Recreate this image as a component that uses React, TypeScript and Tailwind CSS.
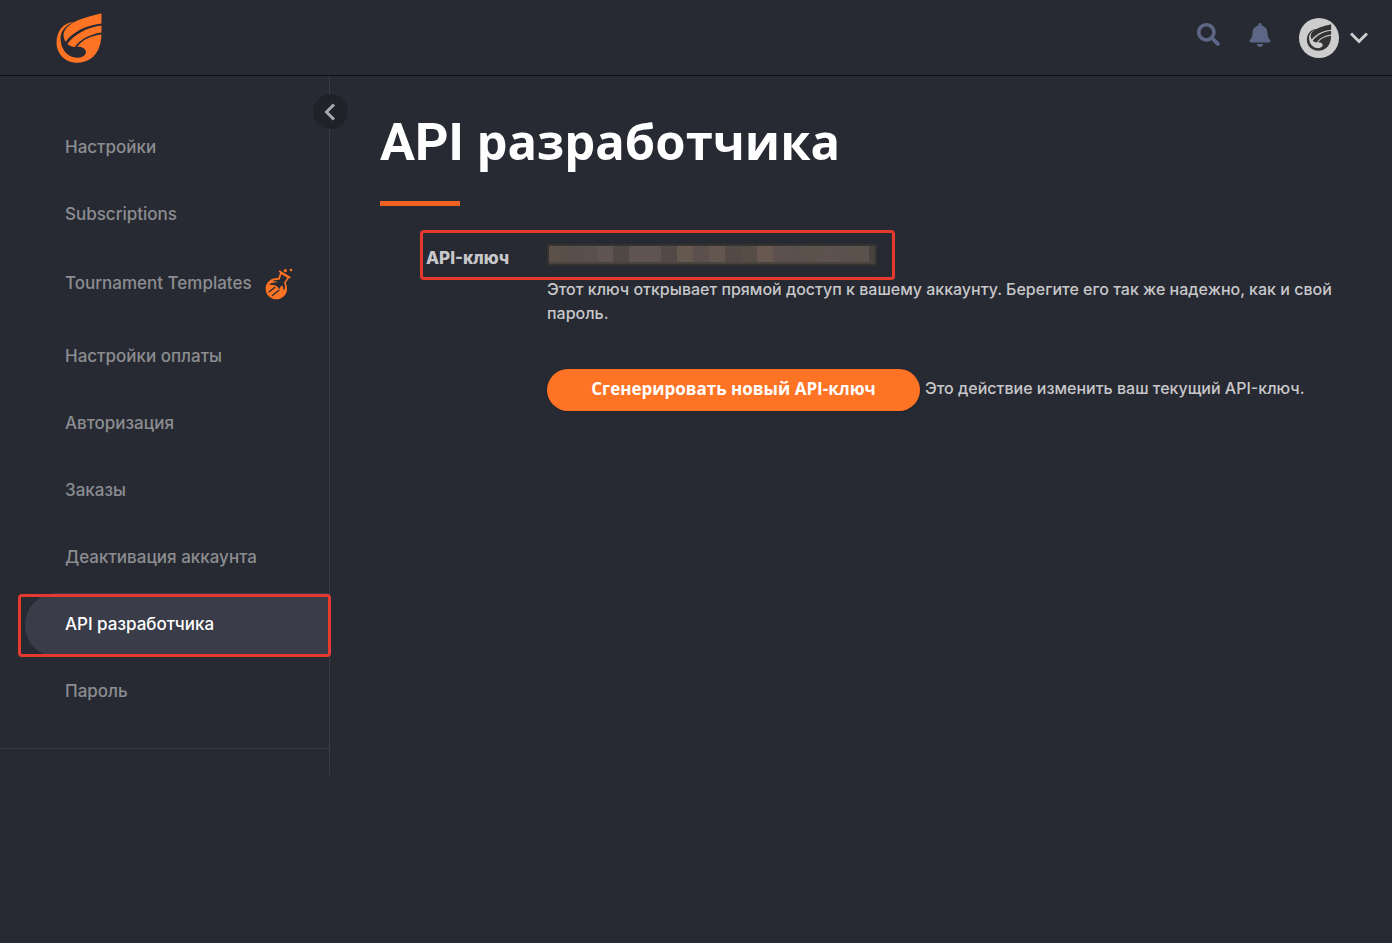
import React from "react";
import { FaBell, FaSearch } from "react-icons/fa";

function LogoMark({ className }: { className: string }) {
  return (
    <svg viewBox="49 40 135 148" className={className} fill="currentColor" aria-hidden="true">
      <path d="M183 41 C145 51 108 60 88 76 C68 91 67 108 77 125 C95 99 133 77 183 71 Z" />
      <path d="M183 77 C137 83 101 105 82 132 C89 138 96 140 104 141 C120 119 148 103 183 98 Z" />
      <path d="M183 104 C152 107 127 120 111 140 C126 140 138 146 137 157 C135 169 119 174 104 172 C79 168 61 143 62 114 C63 93 77 76 102 67 C71 68 50 94 50 127 C50 161 76 187 112 187 C150 187 173 162 180 129 C182 120 183 112 183 104 Z" />
    </svg>
  );
}

function FlaskIcon() {
  return (
    <svg viewBox="46 36 84 96" className="h-8 w-7 text-[#ff7324]" fill="currentColor" aria-hidden="true">
      <path d="M93 46 L120 63 L108 81 C111 87 112 93 112 98 C112 116 98 130 80 130 C62 130 48 116 48 98 C48 80 63 65 86 66 Z" />
      <path d="M88 45 L122 65" stroke="currentColor" strokeWidth="5" />
      <path d="M95 55 L113 65 L103 80 C106 88 108 95 103 103 C99 99 103 91 97 89 C91 89 93 97 88 99 C85 90 78 86 58 86 C66 78 76 81 84 78 C77 75 71 76 66 77 C74 71 82 71 90 71 Z" fill="#272a32" />
      <path d="M57 109 L77 93 M67 119 L89 102" stroke="#272a32" strokeWidth="4" />
      <circle cx="107" cy="44" r="5" />
      <circle cx="124" cy="42" r="4" />
    </svg>
  );
}

const items = [
  { label: "Настройки" },
  { label: "Subscriptions" },
  { label: "Tournament Templates", flask: true },
  { label: "Настройки оплаты" },
  { label: "Авторизация" },
  { label: "Заказы" },
  { label: "Деактивация аккаунта" },
  { label: "API разработчика", active: true },
  { label: "Пароль" },
];

const keyBlocks = [
  "bg-[#5a5047]", "bg-[#584f4a]", "bg-[#5a504b]", "bg-[#5f544f]", "bg-[#504842]",
  "bg-[#5f544f]", "bg-[#5f544f]", "bg-[#534a47]", "bg-[#65584f]", "bg-[#5b504b]",
  "bg-[#62564f]", "bg-[#534a45]", "bg-[#564d47]", "bg-[#67594f]", "bg-[#5c514d]",
  "bg-[#5b514c]", "bg-[#5c524c]", "bg-[#5d524d]", "bg-[#5c524d]", "bg-[#5c524c]",
];

export default function App() {
  return (
    <div className="min-h-screen bg-[#272a32] font-['Inter',sans-serif] text-base text-[#c8c8ca]">
      <header className="flex h-[76px] items-center justify-between border-b border-[#111319] pr-6 pl-14">
        <a href="#" aria-label="Главная" className="text-[#ff7324]">
          <LogoMark className="h-[50px] w-[46px]" />
        </a>
        <div className="flex items-center">
          <button aria-label="Поиск" className="mr-[29px] pb-1.5 text-[#5d6785]">
            <FaSearch size={23} />
          </button>
          <button aria-label="Уведомления" className="mr-7 pb-1.5 text-[#5d6785]">
            <FaBell size={24} className="w-[22px]" />
          </button>
          <button aria-label="Профиль" className="flex items-center gap-[11px] text-[#cdcdcd]">
            <span className="flex size-10 items-center justify-center rounded-full bg-[#cdcdcd] text-[#333333]">
              <LogoMark className="h-[27px] w-[26px]" />
            </span>
            <svg viewBox="0 0 18 12" className="h-3 w-[18px]" fill="none" stroke="currentColor" strokeWidth="3" aria-hidden="true">
              <path d="M1 1.5 L9 9.5 L17 1.5" />
            </svg>
          </button>
        </div>
      </header>

      <div className="flex items-start">
        <aside className="relative w-[330px] shrink-0 border-r border-[#383b43] pt-10 pb-[26px]">
          <button aria-label="Свернуть меню" className="absolute top-[18px] -right-[19px] flex size-[35px] items-center justify-center rounded-full bg-[#20222a] pr-0.5 text-[#aaaaac]">
            <svg viewBox="0 0 12 18" className="h-[18px] w-3" fill="none" stroke="currentColor" strokeWidth="3" aria-hidden="true">
              <path d="M10 1.5 L2.5 9 L10 16.5" />
            </svg>
          </button>
          <nav className="border-b border-[#383b43] pb-6">
            <ul className="flex flex-col gap-[3px]">
              {items.map((item) => (
                <li key={item.label} className="relative pl-[25px]">
                  <a
                    href="#"
                    className={
                      item.active
                        ? "flex h-16 items-center rounded-l-full bg-[#3a3d49] pl-10 text-[17px] font-medium text-white"
                        : item.flask
                          ? "flex h-[72px] items-center gap-[13px] pb-1 pl-10 text-[17px] font-medium text-[#8c8d91]"
                          : "flex h-16 items-center pl-10 text-[17px] font-medium text-[#8c8d91]"
                    }
                  >
                    {item.label}
                    {item.flask && <FlaskIcon />}
                  </a>
                  {item.active && (
                    <span className="pointer-events-none absolute top-px -right-0.5 bottom-0 left-[18px] rounded-sm border-3 border-[#e63a30]" />
                  )}
                </li>
              ))}
            </ul>
          </nav>
        </aside>

        <main className="min-w-0 flex-1 pt-[31px] pr-[50px] pl-[50px]">
          <h1 className="font-['Open_Sans',sans-serif] text-[49px] leading-[68px] font-bold text-white">
            <span className="font-['Roboto',sans-serif] text-[52px]">API</span> разработчика
          </h1>
          <div className="mt-6 h-[5px] w-20 bg-[#f26122]" />

          <section className="pt-6 pl-10">
            <div className="relative flex h-[50px] w-[475px] items-center rounded-sm border-3 border-[#e63a30] pl-[3px]">
              <span className="w-[121px] pt-2 text-[17px] font-extrabold">API-ключ</span>
              <div aria-label="Ключ скрыт" className="flex h-[22px] w-[330px] border-2 border-[#34332f] bg-[#48433f]">
                {keyBlocks.map((tone, i) => (
                  <span key={i} className={`h-4 w-4 ${tone}`} />
                ))}
              </div>
            </div>
            <div className="pl-[127px]">
              <p className="-mt-[3px] leading-6 font-medium">
                Этот ключ открывает прямой доступ к вашему аккаунту. Берегите его так же надежно, как и свой пароль.
              </p>
              <div className="mt-11 flex items-center gap-[5px]">
                <button className="h-[42px] w-[373px] shrink-0 rounded-full bg-[#ff7324] pb-0.5 font-['Open_Sans',sans-serif] text-[17px] font-bold text-white shadow-sm">
                  Сгенерировать новый API-ключ
                </button>
                <span className="pb-1 font-medium">Это действие изменить ваш текущий API-ключ.</span>
              </div>
            </div>
          </section>
        </main>
      </div>
    </div>
  );
}
